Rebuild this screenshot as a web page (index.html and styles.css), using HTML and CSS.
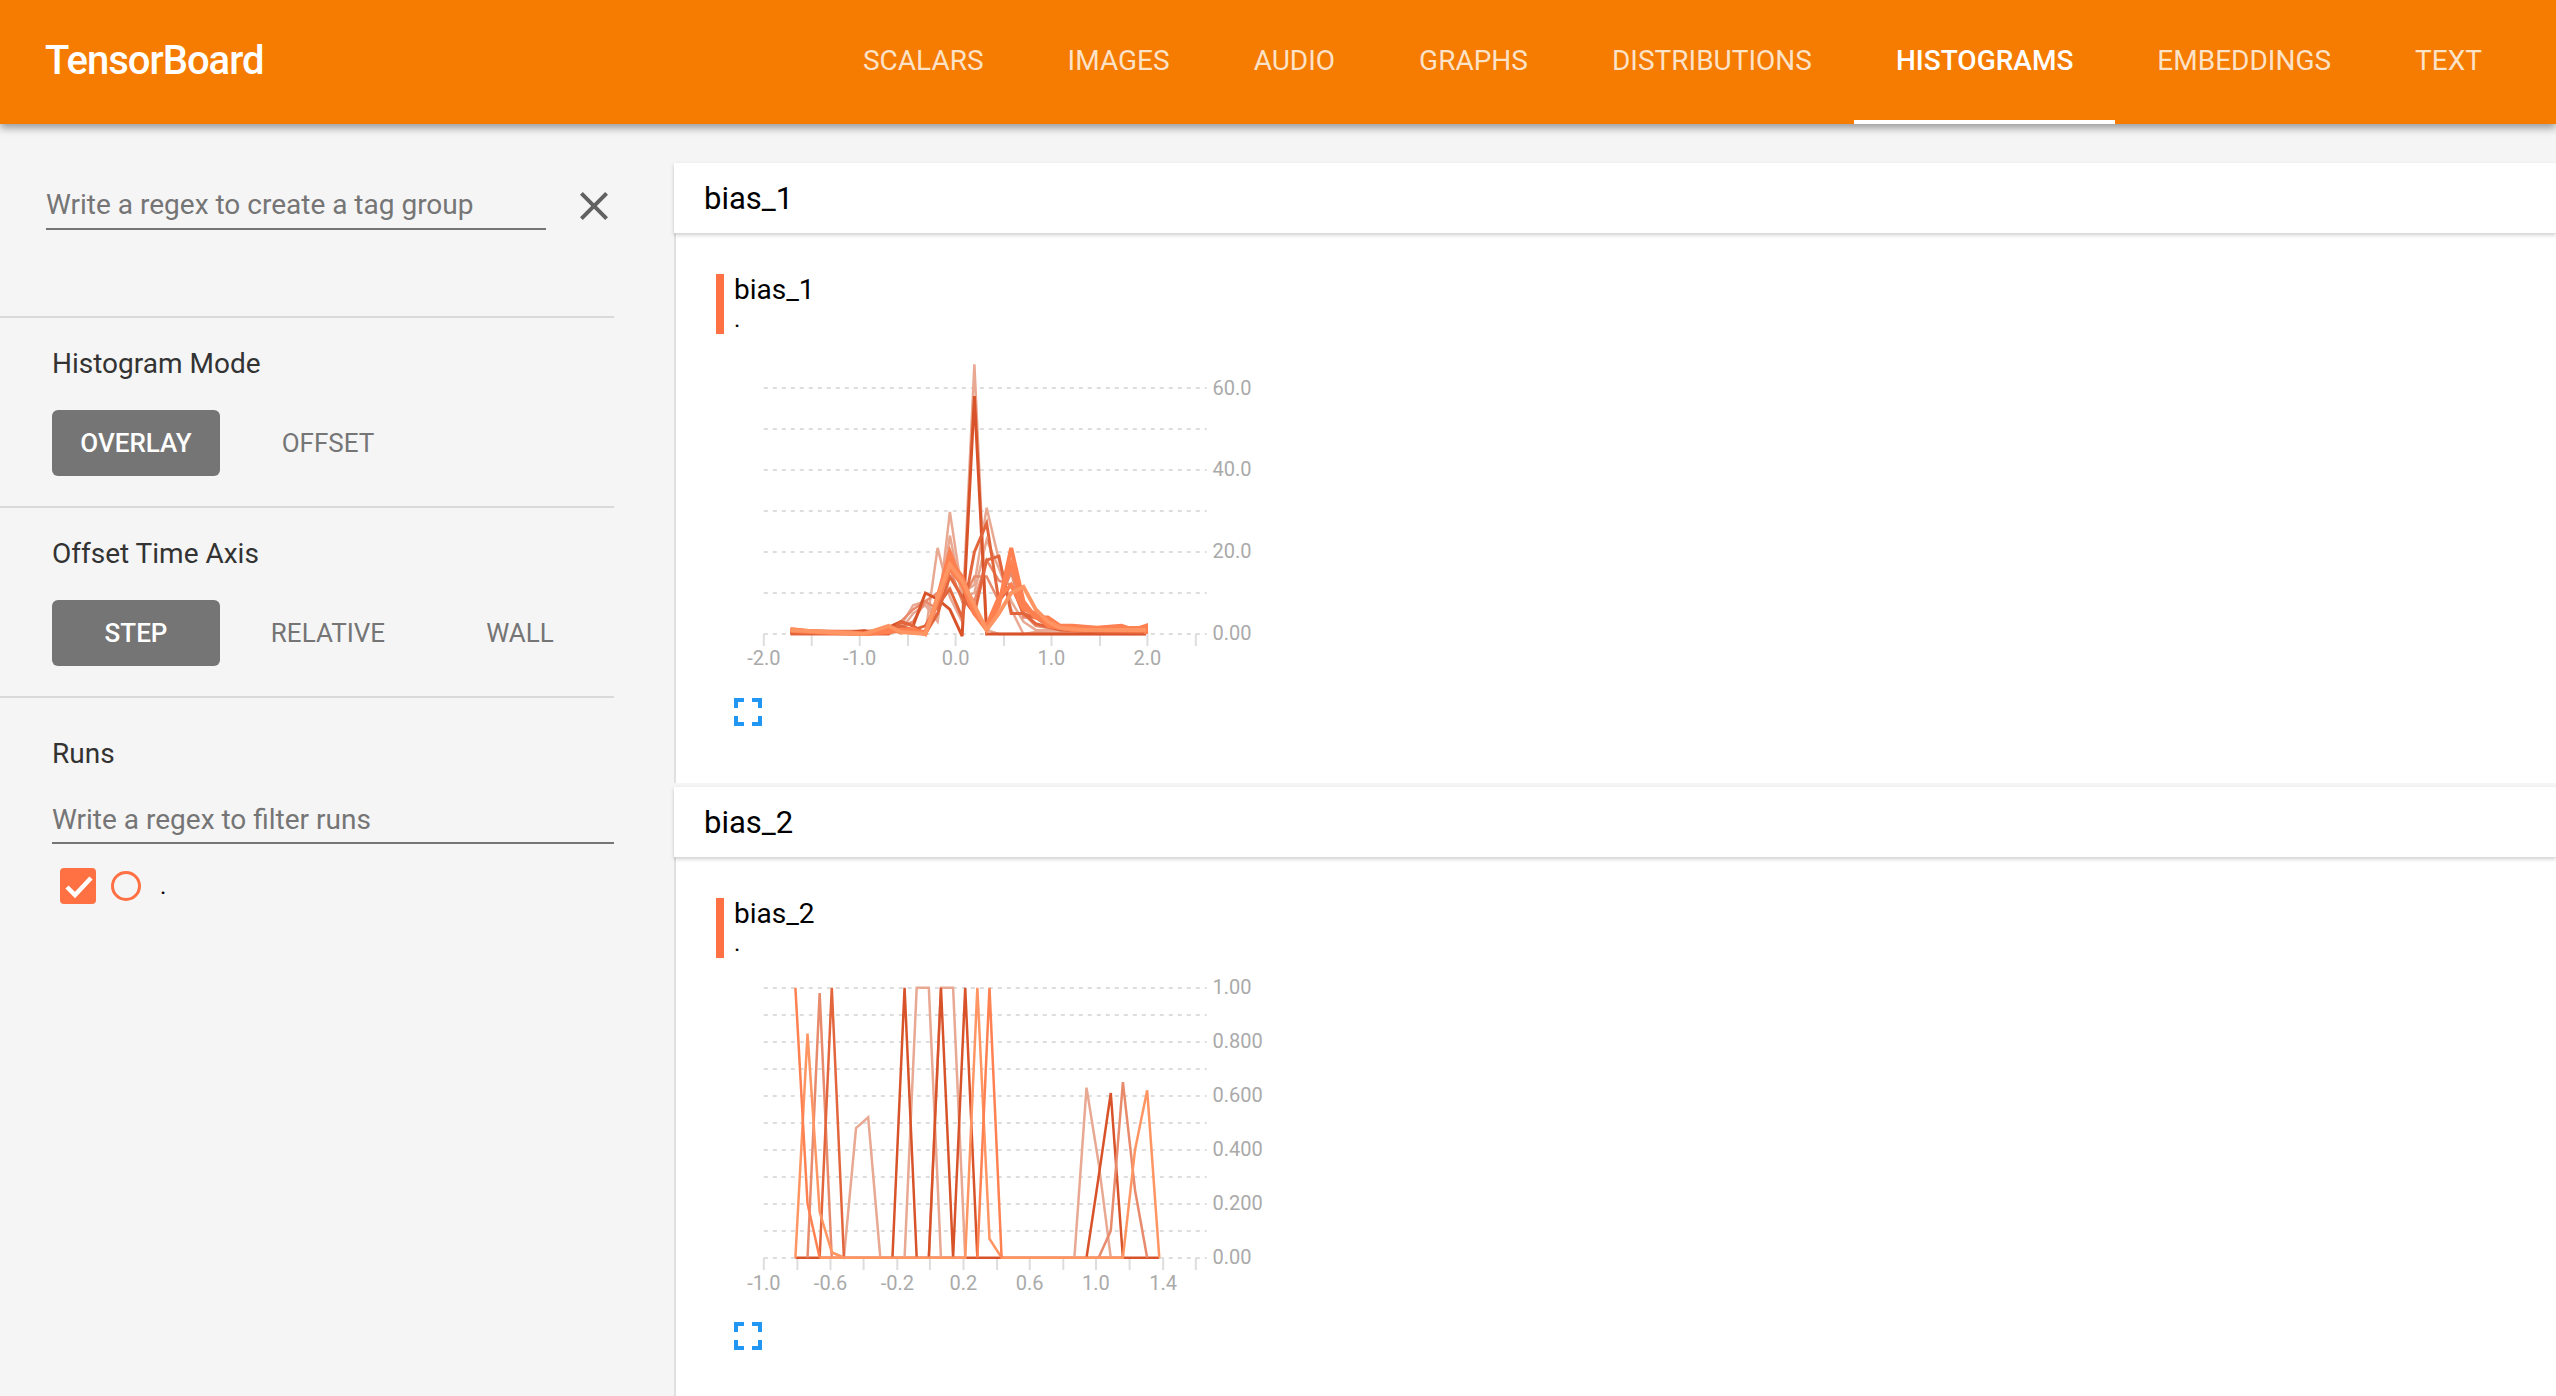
FILE: index.html
```html
<!DOCTYPE html>
<html lang="en">
<head>
<meta charset="utf-8">
<title>TensorBoard</title>
<link rel="stylesheet" href="styles.css">
</head>
<body>
<header class="topbar">
  <div class="brand">TensorBoard</div>
  <nav class="tabs">
    <a class="tab">SCALARS</a>
    <a class="tab">IMAGES</a>
    <a class="tab">AUDIO</a>
    <a class="tab">GRAPHS</a>
    <a class="tab">DISTRIBUTIONS</a>
    <a class="tab tab-active">HISTOGRAMS</a>
    <a class="tab">EMBEDDINGS</a>
    <a class="tab">TEXT</a>
  </nav>
</header>
<div class="layout">
  <aside class="sidebar">
    <section class="tag-group">
      <div class="field field-tag">Write a regex to create a tag group</div>
      <svg class="close-icon" viewBox="0 0 24 24"><path d="M19 6.41L17.59 5 12 10.59 6.41 5 5 6.41 10.59 12 5 17.59 6.41 19 12 13.41 17.59 19 19 17.59 13.41 12z"/></svg>
    </section>
    <section class="control">
      <div class="label">Histogram Mode</div>
      <div class="buttons">
        <div class="btn btn-on">OVERLAY</div>
        <div class="btn">OFFSET</div>
      </div>
    </section>
    <section class="control">
      <div class="label">Offset Time Axis</div>
      <div class="buttons">
        <div class="btn btn-on">STEP</div>
        <div class="btn">RELATIVE</div>
        <div class="btn">WALL</div>
      </div>
    </section>
    <section class="runs">
      <div class="label">Runs</div>
      <div class="field field-runs">Write a regex to filter runs</div>
      <div class="run-row">
        <svg class="check" viewBox="0 0 36 36"><rect width="36" height="36" rx="4" fill="#ff7043"/><path d="M7 19l8 8L31 10" fill="none" stroke="#fff" stroke-width="4.5"/></svg>
        <span class="radio"></span>
        <span class="run-name">.</span>
      </div>
    </section>
  </aside>
  <main class="content">
    <section class="category">
      <h2 class="cat-head">bias_1</h2>
      <div class="cat-body">
        <div class="card-head">
          <div class="card-bar"></div>
          <div class="card-titles"><div class="card-tag">bias_1</div><div class="card-run">.</div></div>
        </div>
        <svg class="chart" viewBox="734 355 545 325">
          <g class="grid">
            <line x1="763.8" x2="1206.7" y1="388" y2="388"/><line x1="763.8" x2="1206.7" y1="429" y2="429"/><line x1="763.8" x2="1206.7" y1="470" y2="470"/><line x1="763.8" x2="1206.7" y1="511" y2="511"/><line x1="763.8" x2="1206.7" y1="552" y2="552"/><line x1="763.8" x2="1206.7" y1="593" y2="593"/><line x1="763.8" x2="1206.7" y1="634" y2="634"/>
          </g>
          <g class="ticks">
            <line x1="763.8" x2="763.8" y1="634" y2="646"/><line x1="811.7" x2="811.7" y1="634" y2="646"/><line x1="859.7" x2="859.7" y1="634" y2="646"/><line x1="908" x2="908" y1="634" y2="646"/><line x1="955.6" x2="955.6" y1="634" y2="646"/><line x1="1004" x2="1004" y1="634" y2="646"/><line x1="1051.5" x2="1051.5" y1="634" y2="646"/><line x1="1100" x2="1100" y1="634" y2="646"/><line x1="1147.4" x2="1147.4" y1="634" y2="646"/><line x1="1195.8" x2="1195.8" y1="634" y2="646"/>
          </g>
          <g class="hist hist-thick" transform="translate(790.5 634) scale(12.26 -4.1)">
            <polyline class="c1" points="0,1 3,.2 8,.2 10,1 11,0 12,21 13,9 14,3 15,65.8 16,1 17,0 29,0"/>
            <polyline class="c1" points="0,.5 8,.3 9,2 10,7 11,8 12,4 13,29.8 14,10 15,12 16,30.8 17,18 18,6 19,0 20,.5 22,.3 29,.6"/>
            <polyline class="c1" points="0,.5 9,1 10,5 11,7 12,3 13,24 14,9 15,10 16,23 17,16 18,8 19,3 20,1 29,.5"/>
            <polyline class="c2" points="0,.8 8,.4 9,3 10,6 11,8 12,6 13,19 14,12 15,8 16,18 17,13 18,12 19,5 20,2 22,1 29,.6"/>
            <polyline class="c2" points="0,1 8,.5 10,3 11,8 12,10 13,16 14,8 15,14 16,14 17,8 18,15 19,4 20,4 22,2 29,1"/>
            <polyline class="c4" points="0,.2 5,.5 6,.8 7,.2 9,3 10,2 11,10 12,8.5 13,6 14,-.5 15,58 16,0 29,0"/>
            <polyline class="c3" points="0,.3 8,.1 9,2 10,1 11,2 12,7 13,11 14,4 15,20 16,27 17,8 18,12 19,5 20,2.5 22,1 25,.5 29,.3"/>
            <polyline class="c3" points="0,0 8,0 9,3 10,2 11,0 12,5 13,14 14,9 15,5 16,18 17,19 18,5 19,5 20,4 21,2 22,1.5 24,1 29,.7"/>
            <polyline class="c5" points="0,.8 3,.3 6,0 8,.5 9,1 10,1.2 11,0 12,9 13,20 14,12 15,5 16,1 17,8 18,17 19,7 20,4 21,3 22,1.5 24,1.3 26,1.6 27,1.4 29,1.5 29,0"/>
            <polyline class="c5" points="0,1.2 2,.5 4,.4 6,.1 7,.5 8,1.5 9,.4 10,.8 11,0 12,8 13,18 14,14 15,6 16,1 17,7 18,21 19,8 20,4 21,4 22,2 23,2 25,1.5 27,2 28,1 29,2 29,0"/>
            <polyline class="c5" points="0,1 6,0 9,1 11,.5 12,8 13,16 14,12 15,5 16,2 17,9 18,12 19,6 20,5 21,2 23,1 29,.8"/>
            <polyline class="c6" points="0,1 3,.5 6,0 8,2 9,.5 11,0 12,9 13,17 14,13 15,7 16,1 17,5 18,10 19,11.5 20,6 21,3 22,1.5 24,1 26,1 29,1"/>
          </g>
          <g class="axis-y">
            <text x="1212.6" y="395">60.0</text><text x="1212.6" y="476">40.0</text><text x="1212.6" y="558">20.0</text><text x="1212.6" y="640">0.00</text>
          </g>
          <g class="axis-x">
            <text x="763.8" y="665">-2.0</text><text x="859.7" y="665">-1.0</text><text x="955.6" y="665">0.0</text><text x="1051.5" y="665">1.0</text><text x="1147.4" y="665">2.0</text>
          </g>
        </svg>
        <svg class="expand" viewBox="0 0 24 24"><path d="M7 14H5v5h5v-2H7v-3zm-2-4h2V7h3V5H5v5zm12 7h-3v2h5v-5h-2v3zM14 5v2h3v3h2V5h-5z"/></svg>
      </div>
    </section>
    <section class="category">
      <h2 class="cat-head">bias_2</h2>
      <div class="cat-body">
        <div class="card-head">
          <div class="card-bar"></div>
          <div class="card-titles"><div class="card-tag">bias_2</div><div class="card-run">.</div></div>
        </div>
        <svg class="chart" viewBox="734 979 545 325">
          <g class="grid">
            <line x1="763.8" x2="1206.7" y1="988" y2="988"/><line x1="763.8" x2="1206.7" y1="1015" y2="1015"/><line x1="763.8" x2="1206.7" y1="1042" y2="1042"/><line x1="763.8" x2="1206.7" y1="1069" y2="1069"/><line x1="763.8" x2="1206.7" y1="1096" y2="1096"/><line x1="763.8" x2="1206.7" y1="1123" y2="1123"/><line x1="763.8" x2="1206.7" y1="1150" y2="1150"/><line x1="763.8" x2="1206.7" y1="1177" y2="1177"/><line x1="763.8" x2="1206.7" y1="1204" y2="1204"/><line x1="763.8" x2="1206.7" y1="1231" y2="1231"/><line x1="763.8" x2="1206.7" y1="1258" y2="1258"/>
          </g>
          <g class="ticks">
            <line x1="763.8" x2="763.8" y1="1258" y2="1270"/><line x1="797.4" x2="797.4" y1="1258" y2="1270"/><line x1="830.5" x2="830.5" y1="1258" y2="1270"/><line x1="863.6" x2="863.6" y1="1258" y2="1270"/><line x1="897.3" x2="897.3" y1="1258" y2="1270"/><line x1="929.9" x2="929.9" y1="1258" y2="1270"/><line x1="963.5" x2="963.5" y1="1258" y2="1270"/><line x1="997.1" x2="997.1" y1="1258" y2="1270"/><line x1="1029.7" x2="1029.7" y1="1258" y2="1270"/><line x1="1063.3" x2="1063.3" y1="1258" y2="1270"/><line x1="1096" x2="1096" y1="1258" y2="1270"/><line x1="1129.6" x2="1129.6" y1="1258" y2="1270"/><line x1="1163.2" x2="1163.2" y1="1258" y2="1270"/><line x1="1195.8" x2="1195.8" y1="1258" y2="1270"/>
          </g>
          <g class="hist" transform="translate(795.4 1257.7) scale(12.13 -270)">
            <polyline class="c4" points="0,0 30,0"/>
            <polyline class="c1" points="3,.02 4,0 5,.48 6,.52 7,0 9,0 10,1 11,1 12,0"/>
            <polyline class="c1" points="11,0 12,1 13,1 14,0"/>
            <polyline class="c1" points="23,0 24,.63 25,.35 26,0"/>
            <polyline class="c2" points="1,0 2,.98 3,0"/>
            <polyline class="c3" points="2,0 3,1 4,0"/>
            <polyline class="c4" points="8,0 9,1 10,0"/>
            <polyline class="c4" points="11,0 12,1 13,0 14,1 15,0"/>
            <polyline class="c4" points="24,0 25,.3 26,.61 27,0"/>
            <polyline class="c2" points="25,0 26,.1 27,.65 28,.25 29,0"/>
            <polyline class="c6" points="0,0 1,.83 2,.17 3,.02 4,0"/>
            <polyline class="c5" points="0,1 1,.2 2,0"/>
            <polyline class="c6" points="2,0 14,0 15,1 16,.07 17,0 27,0 28,.4 29,.62 30,0"/>
            <polyline class="c5" points="15,0 16,1 17,0"/>
          </g>
          <g class="axis-y">
            <text x="1212.6" y="994">1.00</text><text x="1212.6" y="1048">0.800</text><text x="1212.6" y="1102">0.600</text><text x="1212.6" y="1156">0.400</text><text x="1212.6" y="1210">0.200</text><text x="1212.6" y="1264">0.00</text>
          </g>
          <g class="axis-x">
            <text x="763.8" y="1290">-1.0</text><text x="830.5" y="1290">-0.6</text><text x="897.3" y="1290">-0.2</text><text x="963.5" y="1290">0.2</text><text x="1029.7" y="1290">0.6</text><text x="1096" y="1290">1.0</text><text x="1163.2" y="1290">1.4</text>
          </g>
        </svg>
        <svg class="expand" viewBox="0 0 24 24"><path d="M7 14H5v5h5v-2H7v-3zm-2-4h2V7h3V5H5v5zm12 7h-3v2h5v-5h-2v3zM14 5v2h3v3h2V5h-5z"/></svg>
      </div>
    </section>
  </main>
</div>
</body>
</html>
```
FILE: styles.css
```css
* { box-sizing: border-box; }
html, body { height: 100%; }
body {
  margin: 0;
  display: flex;
  flex-direction: column;
  height: 100vh;
  overflow: hidden;
  background: #f5f5f5;
  font-family: Roboto, "Liberation Sans", sans-serif;
  color: #212121;
}
.topbar {
  position: relative;
  z-index: 2;
  flex: none;
  height: 124px;
  display: flex;
  align-items: center;
  background: #f57c00;
  box-shadow: 0 4px 8px rgba(0, 0, 0, .38);
}
.brand {
  padding: 0 0 3px 45px;
  font-size: 40px;
  font-weight: 500;
  color: #fff;
  letter-spacing: -1px;
}
.tabs {
  margin-left: auto;
  display: flex;
  padding-right: 32px;
}
.tab {
  height: 124px;
  display: flex;
  align-items: center;
  padding: 0 42px 3px;
  font-size: 28px;
  font-weight: 400;
  color: rgba(255, 255, 255, .78);
}
.tab-active {
  color: #fff;
  font-weight: 500;
  box-shadow: inset 0 -4px 0 #fff;
}
.layout {
  flex: 1;
  min-height: 0;
  display: flex;
}
.sidebar {
  flex: none;
  width: 674px;
  padding-right: 60px;
}
.tag-group {
  height: 194px;
  padding: 58px 0 0 46px;
  display: flex;
  align-items: flex-start;
  border-bottom: 2px solid #d9d9d9;
}
.field {
  height: 48px;
  border-bottom: 2px solid #757575;
  font-size: 28px;
  color: #757575;
  line-height: 47px;
}
.field-tag {
  flex: none;
  width: 500px;
  line-height: 45px;
}
.field-runs {
  margin: 23px 0 0 52px;
}
.close-icon {
  flex: none;
  width: 48px;
  height: 48px;
  margin-left: 24px;
  fill: #616161;
}
.control {
  height: 190px;
  padding-top: 26px;
  border-bottom: 2px solid #d9d9d9;
}
.label {
  height: 40px;
  line-height: 40px;
  padding-left: 52px;
  font-size: 28px;
  color: #333;
}
.buttons {
  display: flex;
  gap: 24px;
  padding-left: 52px;
  margin-top: 26px;
}
.btn {
  width: 168px;
  height: 66px;
  display: flex;
  align-items: center;
  justify-content: center;
  border-radius: 6px;
  font-size: 26px;
  color: #757575;
}
.btn-on {
  background: #757575;
  color: #fff;
  font-weight: 500;
}
.runs {
  padding-top: 36px;
}
.runs .field {
  margin-top: 22px;
}
.run-row {
  display: flex;
  align-items: center;
  margin-top: 24px;
  padding-left: 60px;
}
.check {
  width: 36px;
  height: 36px;
}
.radio {
  width: 30px;
  height: 30px;
  margin-left: 15px;
  border: 3px solid #ff7043;
  border-radius: 50%;
}
.run-name {
  margin-left: 19px;
  font-size: 24px;
  color: #000;
}
.content {
  flex: 1;
  min-width: 0;
  padding-top: 39px;
  display: flex;
  flex-direction: column;
  gap: 4px;
}
.cat-head {
  position: relative;
  margin: 0;
  height: 70px;
  padding-left: 30px;
  background: #fff;
  font-size: 31px;
  font-weight: 400;
  line-height: 72px;
  color: #000;
  box-shadow: 0 2px 4px rgba(0, 0, 0, .2);
}
.cat-body {
  background: #fff;
  border-left: 2px solid #e0e0e0;
  padding: 41px 0 47px 40px;
}
.card-head {
  display: flex;
  gap: 10px;
}
.card-bar {
  width: 8px;
  height: 60px;
  background: #ff7043;
}
.card-tag {
  height: 30px;
  font-size: 28px;
  line-height: 32px;
  color: #000;
}
.card-run {
  height: 30px;
  font-size: 24px;
  line-height: 30px;
  color: #000;
}
.chart {
  display: block;
  width: 545px;
  height: 325px;
  margin: 21px 0 0 18px;
}
.expand {
  display: block;
  width: 48px;
  height: 48px;
  margin: 8px 0 0 8px;
  fill: #2196f3;
}
.grid line {
  stroke: #ddd;
  stroke-width: 2;
  stroke-dasharray: 4 5;
}
.ticks line {
  stroke: #ddd;
  stroke-width: 2;
}
.hist polyline {
  fill: none;
  stroke-width: 2.5;
  vector-effect: non-scaling-stroke;
}
.hist .c1 { stroke: #e8a892; }
.hist .c2 { stroke: #e88a6c; }
.hist .c3 { stroke: #e2653c; }
.hist .c4 { stroke: #d9532a; }
.hist .c5 { stroke: #ff8050; }
.hist .c6 { stroke: #ff9562; }
.hist-thick .c3, .hist-thick .c4 { stroke-width: 3; }
.hist-thick .c5, .hist-thick .c6 { stroke-width: 4; }
.axis-y text, .axis-x text {
  font-size: 20px;
  fill: #aaa;
}
.axis-x text { text-anchor: middle; }
```
